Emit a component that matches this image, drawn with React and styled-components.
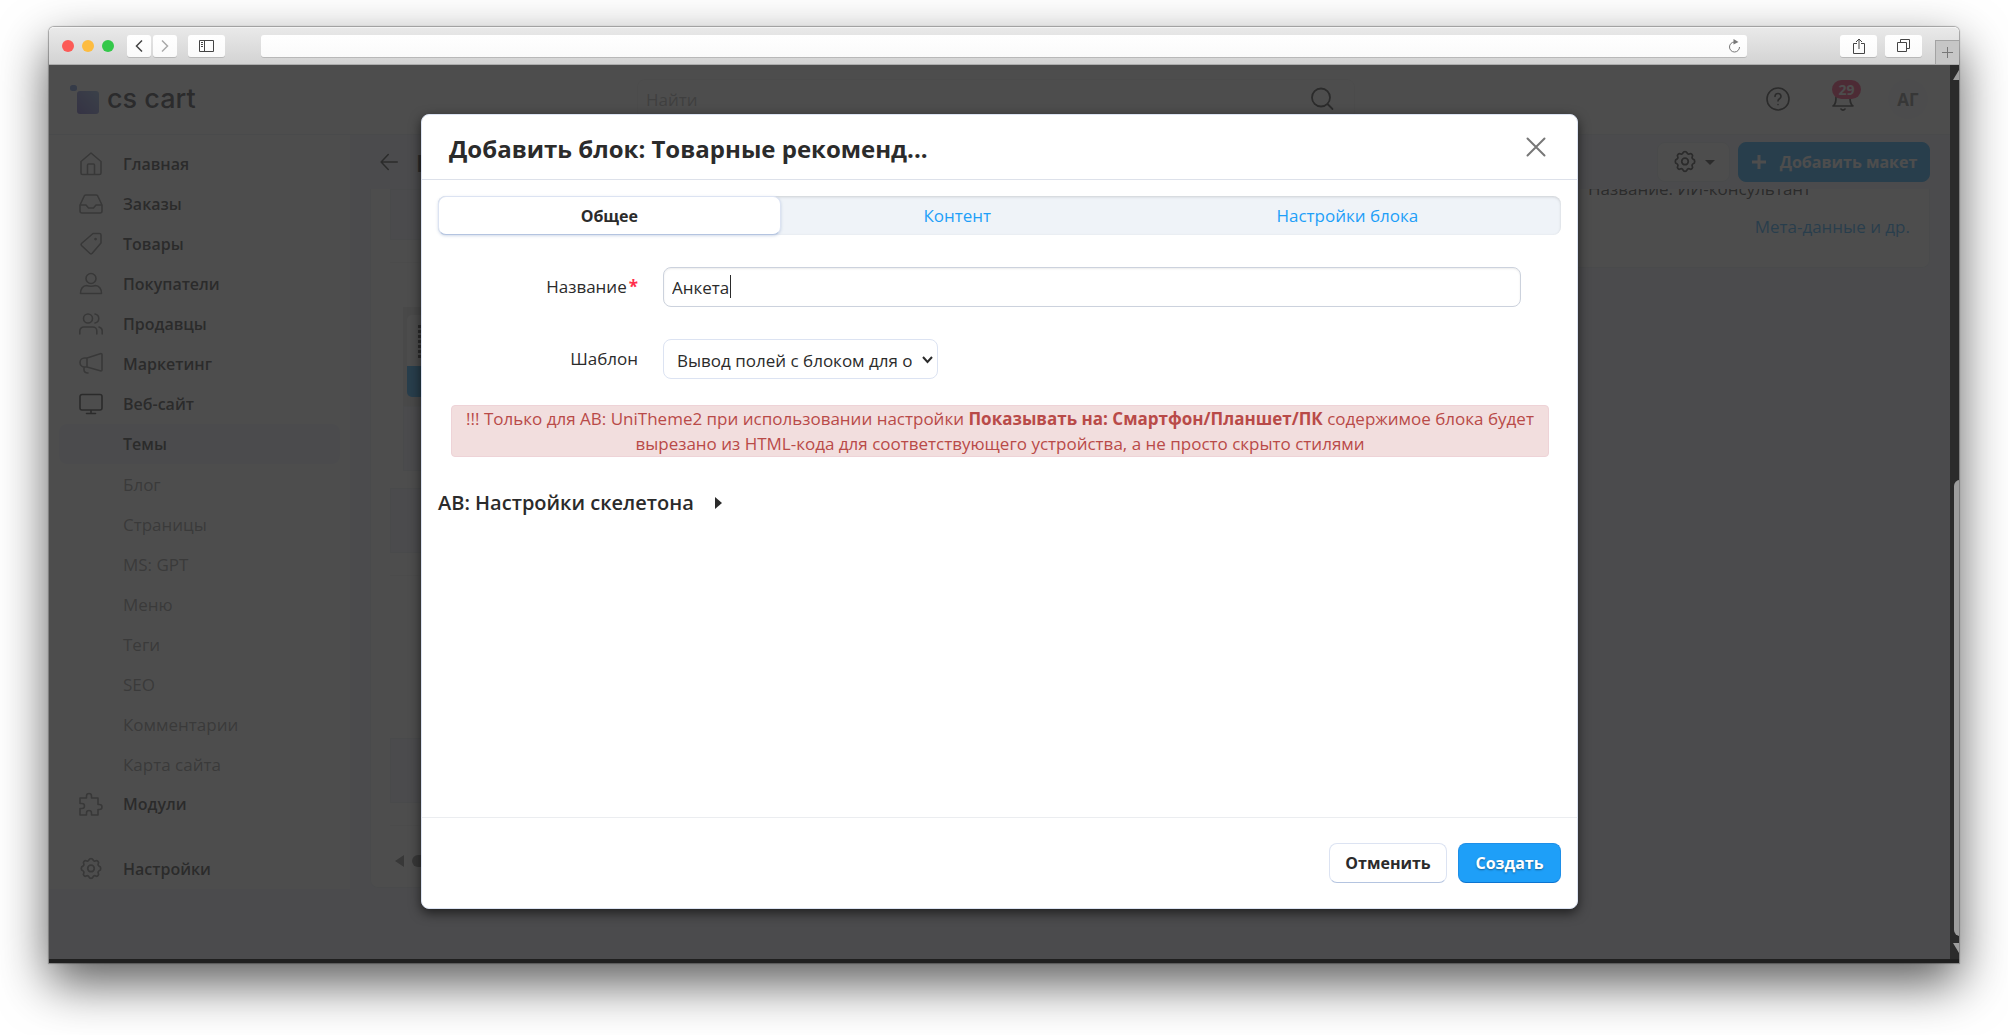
import React, { useState } from "react";
import styled, { createGlobalStyle } from "styled-components";

const GlobalStyle = createGlobalStyle`
  * {
    box-sizing: border-box;
  }

  html,
  body,
  #root {
    height: 100%;
  }

  body {
    margin: 0;
    background: #fff;
    color: #2b2b2b;
    font-family: "Open Sans", "Noto Sans", sans-serif;
    font-size: 17px;
  }

  button,
  input,
  select {
    font: inherit;
    color: inherit;
  }
`;

const Desktop = styled.div`
  height: 100%;
  padding: 27px 49px 72px;
  overflow: hidden;
`;

const Window = styled.div`
  height: 100%;
  display: flex;
  flex-direction: column;
  border-radius: 5px 5px 0 0;
  box-shadow: 0 0 1px 1px rgba(0, 0, 0, 0.3), 0 20px 50px rgba(0, 0, 0, 0.65);
`;

const Chrome = styled.div`
  height: 38px;
  flex: none;
  display: flex;
  align-items: center;
  padding: 0 0 1px 13px;
  border-top: 1px solid #f4f4f4;
  border-bottom: 1px solid #acacac;
  border-radius: 5px 5px 0 0;
  background: linear-gradient(#e9e9e9, #d3d3d3);
`;

const Lights = styled.div`
  display: flex;
  gap: 8px;
  margin-right: 13px;
`;

const Light = styled.span`
  width: 12px;
  height: 12px;
  border-radius: 50%;
  background: ${(props) => props.$color};
`;

const ChromeButton = styled.button`
  width: ${(props) => (props.$small ? "24px" : "37px")};
  height: 22px;
  display: flex;
  align-items: center;
  justify-content: center;
  padding: 0;
  border: 0;
  border-radius: 3px;
  background: linear-gradient(#fff, #fafafa);
  box-shadow: 0 1px 0 #b8b8b8;
`;

const ChromeGroup = styled.div`
  display: flex;
  gap: ${(props) => props.$gap || "0"};
  margin-left: ${(props) => props.$left || "0"};
`;

const Address = styled.div`
  flex: 1;
  height: 22px;
  margin: 0 93px 0 36px;
  display: flex;
  align-items: center;
  justify-content: flex-end;
  padding-right: 6px;
  border-radius: 3px;
  background: linear-gradient(#fff, #fafafa);
  box-shadow: 0 1px 0 #b8b8b8;
`;

const AddressInput = styled.input`
  flex: 1;
  border: 0;
  outline: 0;
  background: transparent;
  height: 20px;
`;

const NewTab = styled.button`
  width: 24px;
  height: 24px;
  align-self: flex-end;
  margin: 0 0 -1px 13px;
  padding: 0;
  display: flex;
  align-items: center;
  justify-content: center;
  border: 1px solid #a3a3a3;
  border-width: 1px 0 0 1px;
  background: #c6c6c6;
`;

const Viewport = styled.div`
  position: relative;
  flex: 1;
  min-height: 0;
  display: flex;
  border-bottom: 4px solid #1f1f1f;
`;

const Page = styled.div`
  position: relative;
  flex: 1;
  min-width: 0;
  display: flex;
  flex-direction: column;
  background: #f0f3fa;
`;

const Scrollbar = styled.div`
  width: 9px;
  flex: none;
  display: flex;
  flex-direction: column;
  background: #2b2b2b;
  overflow: hidden;

  svg {
    flex: none;
  }
`;

const ScrollThumb = styled.div`
  margin: auto 0 0 4px;
  height: 51%;
  width: 12px;
  border-radius: 6px;
  background: #9d9d9d;
`;

const Header = styled.header`
  height: 70px;
  flex: none;
  display: grid;
  grid-template-columns: 588px 718px 1fr;
  border-bottom: 1px solid #e6ecf3;
  background: #fff;
`;

const Logo = styled.a`
  display: flex;
  padding: 18px 0 0 20px;
  gap: 8px;
  color: #2b2b35;
  text-decoration: none;
  font: 500 27px/32px Inter, sans-serif;
`;

const Search = styled.div`
  height: 40px;
  margin-top: 14px;
  display: flex;
  align-items: center;
  padding: 0 20px 0 6px;
  border: 1px solid #f1f1f1;
  border-radius: 8px;
`;

const SearchInput = styled.input`
  flex: 1;
  border: 0;
  outline: 0;
  background: transparent;

  &::placeholder {
    color: #aaa;
  }
`;

const HeaderTools = styled.div`
  display: flex;
  justify-content: flex-end;
  align-items: flex-start;
  padding: 14px 22px 0 0;
  gap: 25px;
`;

const ToolButton = styled.button`
  position: relative;
  width: 40px;
  height: 40px;
  padding: 0;
  display: flex;
  align-items: center;
  justify-content: center;
  border: 0;
  border-radius: 50%;
  font-weight: 700;
  color: ${(props) => (props.$avatar ? "#777" : "#2b2b2b")};
  background: ${(props) => (props.$avatar ? "#f6f8fa" : "transparent")};
`;

const Badge = styled.span`
  position: absolute;
  top: 1px;
  left: 9px;
  width: 29px;
  line-height: 19px;
  border-radius: 10px;
  background: #ff2f6b;
  color: #fff;
  font-size: 14px;
  font-weight: 700;
`;

const Body = styled.div`
  flex: 1;
  display: flex;
  align-items: flex-start;
`;

const Sidebar = styled.nav`
  width: 301px;
  flex: none;
  padding: 9px 10px 0;
  background: #fff;
`;

const NavLink = styled.a`
  height: 40px;
  display: flex;
  align-items: center;
  gap: 20px;
  padding-left: 20px;
  margin-top: ${(props) => (props.$apart ? "25px" : "0")};
  border-radius: 8px;
  text-decoration: none;
  font-size: ${(props) => (props.$sub ? "17px" : "16px")};
  font-weight: ${(props) => (props.$sub ? 400 : 600)};
  color: ${(props) => (props.$sub ? "#8a8a8a" : "#2b2b2b")};
  background: ${(props) => (props.$active ? "#f0f3fa" : "transparent")};

  svg {
    width: 24px;
    height: 24px;
    color: ${(props) => (props.$open ? "#2b2b2b" : "#7c7c7c")};
  }
`;

const IconGap = styled.span`
  width: 24px;
`;

const Main = styled.main`
  flex: 1;
  min-width: 0;
  padding: 0 20px;
`;

const Actions = styled.div`
  height: 54px;
  display: flex;
  align-items: center;
  gap: 8px;
  padding-left: 10px;
`;

const PageTitle = styled.h1`
  flex: 1;
  margin: 0 0 0 10px;
  font-size: 24px;
`;

const BackLink = styled.a`
  display: flex;
  color: inherit;
`;

const ActionButton = styled.button`
  height: 40px;
  display: flex;
  align-items: center;
  justify-content: center;
  gap: ${(props) => (props.$primary ? "13px" : "8px")};
  min-width: ${(props) => (props.$primary ? "192px" : "73px")};
  padding: 0 8px;
  white-space: nowrap;
  border: 1px solid ${(props) => (props.$primary ? "#1e9ff8" : "#e4e9f0")};
  border-radius: 8px;
  font-size: 16px;
  font-weight: 700;
  color: ${(props) => (props.$primary ? "#fff" : "#2b2b2b")};
  background: ${(props) => (props.$primary ? "#1e9ff8" : "#fff")};
`;

const Columns = styled.div`
  display: grid;
  grid-template-columns: 1fr 360px;
  gap: 20px;
  align-items: start;
`;

const Card = styled.section`
  border: 1px solid #e6ecf3;
  border-top: 0;
  border-radius: 0 0 8px 8px;
  background: #fff;
`;

const LayoutCard = styled(Card)`
  height: 699px;
  padding: 0 19px;
  display: flex;
  flex-direction: column;
`;

const Strip = styled.div`
  height: ${(props) => props.$height || "65px"};
  flex: none;
  margin-top: ${(props) => props.$top || "0"};
  margin-left: ${(props) => props.$inset || "0"};
  border: 1px solid #e3eaf2;
  background: #f0f3fa;
`;

const Divider = styled.div`
  flex: none;
  margin-top: 22px;
  border-top: 1px solid #f2f2f2;
`;

const Tile = styled.div`
  height: 99px;
  flex: none;
  margin: 44px 0 0 13px;
  padding: 8px 4px 9px;
  background: #e2e2e2;
`;

const TileFace = styled.div`
  height: 82px;
  border-radius: 5px;
  padding: 10px 11px;
  background: linear-gradient(#fff 51px, #1e9ff8 51px);
`;

const TileDots = styled.div`
  width: 4px;
  height: 33px;
  background: repeating-linear-gradient(#2b2b2b 0 3px, transparent 3px 5px);
`;

const Pager = styled.div`
  display: flex;
  align-items: center;
  gap: 8px;
  margin: 29px 0 0 5px;
  color: #7c7c7c;
`;

const InfoCard = styled(Card)`
  height: 79px;
  overflow: hidden;
  padding: 0 19px 0 17px;
`;

const InfoName = styled.p`
  margin: -12px 0 0;
  line-height: 24px;
`;

const InfoLink = styled.a`
  display: block;
  margin-top: 14px;
  line-height: 24px;
  text-align: right;
  color: #1e9ff8;
  text-decoration: none;
`;

const Backdrop = styled.div`
  position: absolute;
  inset: 0 9px 0 0;
  background: rgba(43, 43, 43, 0.84);
  display: flex;
  justify-content: center;
  align-items: flex-start;
  padding: 49px 372px 50px;
`;

const Dialog = styled.div`
  width: 100%;
  height: 100%;
  display: flex;
  flex-direction: column;
  border: 1px solid #dce3f2;
  border-radius: 8px;
  background: #fff;
  box-shadow: 0 4px 12px rgba(0, 0, 0, 0.6);
`;

const DialogHeader = styled.div`
  height: 65px;
  flex: none;
  display: flex;
  align-items: center;
  justify-content: space-between;
  padding: 0 29px 0 27px;
  border-bottom: 1px solid #dde1ea;
`;

const DialogTitle = styled.h2`
  margin: 0;
  padding-top: 4px;
  font-size: 24px;
  line-height: 32px;
  font-weight: 700;
`;

const CloseButton = styled.button`
  display: flex;
  padding: 0;
  border: 0;
  background: transparent;
  color: #777;
`;

const DialogBody = styled.div`
  flex: 1;
  padding: 16px 16px 0;
`;

const Tabs = styled.div`
  height: 39px;
  display: flex;
  border-radius: 8px;
  background: #eff3f8;
  box-shadow: inset 0 1px 3px rgba(0, 0, 0, 0.15);
`;

const Tab = styled.button`
  flex: 1 1 auto;
  padding: 0;
  border: 1px solid ${(props) => (props.$active ? "#dce3f2" : "transparent")};
  border-bottom-color: ${(props) => (props.$active ? "#b4c4e0" : "transparent")};
  border-radius: 8px;
  font-size: ${(props) => (props.$active ? "16px" : "17px")};
  font-weight: ${(props) => (props.$active ? 700 : 400)};
  color: ${(props) => (props.$active ? "#2b2b2b" : "#1e9ff8")};
  background: ${(props) => (props.$active ? "#fff" : "transparent")};
  box-shadow: ${(props) => (props.$active ? "0 1px 3px rgba(100, 130, 180, 0.3)" : "none")};
`;

const Field = styled.div`
  height: 40px;
  display: grid;
  grid-template-columns: 200px 1fr;
  column-gap: 25px;
  align-items: center;
  margin: 32px 40px 0 0;
`;

const Label = styled.label`
  padding-bottom: 2px;
  text-align: right;
`;

const Required = styled.span`
  margin-left: 2px;
  font-weight: 700;
  color: #ff2f4b;
`;

const Control = styled.div`
  position: relative;
  width: ${(props) => props.$width || "100%"};
`;

const TextInput = styled.input`
  display: block;
  width: 100%;
  height: 40px;
  padding: 0 8px;
  border: 1px solid #ccd2dd;
  border-radius: 8px;
  outline: 0;
  caret-color: transparent;
  box-shadow: inset 0 1px 2px rgba(0, 0, 0, 0.08);
`;

const Caret = styled.span`
  position: absolute;
  top: 8px;
  left: 67px;
  width: 1px;
  height: 23px;
  background: #2b2b2b;
`;

const SelectInput = styled.select`
  display: block;
  width: 100%;
  height: 40px;
  padding: 2px 25px 0 13px;
  appearance: none;
  border: 1px solid #dce3f2;
  border-radius: 8px;
  background: #fff;
`;

const SelectArrow = styled.svg`
  position: absolute;
  top: 17px;
  right: 5px;
  pointer-events: none;
`;

const Alert = styled.div`
  margin: 26px 12px 0 13px;
  padding: 0 8px;
  border: 1px solid #eed3d7;
  border-radius: 4px;
  line-height: 25px;
  text-align: center;
  color: #b94a48;
  background: #f2dede;
`;

const Disclosure = styled.button`
  margin-top: 31px;
  padding: 0;
  display: flex;
  align-items: center;
  gap: 21px;
  border: 0;
  background: transparent;
  font-size: 20px;
  line-height: 30px;
  font-weight: 600;
`;

const DialogFooter = styled.div`
  height: 91px;
  flex: none;
  display: flex;
  justify-content: flex-end;
  gap: 11px;
  padding: 25px 16px 0;
  border-top: 1px solid #ebedf0;
`;

const Button = styled.button`
  height: 40px;
  min-width: ${(props) => (props.$primary ? "103px" : "118px")};
  padding: 0;
  border: 1px solid ${(props) => (props.$primary ? "#1e8fe8" : "#dce3f2")};
  border-bottom-color: ${(props) => (props.$primary ? "#0c74d0" : "#b4c4e0")};
  border-radius: 8px;
  font-size: 16px;
  font-weight: 700;
  color: ${(props) => (props.$primary ? "#fff" : "#2b2b2b")};
  background: ${(props) => (props.$primary ? "#1e9ff8" : "#fff")};
  text-shadow: ${(props) => (props.$primary ? "0 1px 2px rgba(0, 0, 0, 0.4)" : "none")};
`;

const gearPath =
  "M10.3 3.4c.4-1.3 3-1.3 3.4 0 .4 1.3 1.6 1.8 2.8 1.1 1.2-.7 3 1.1 2.3 2.300-.7 1.200-.2 2.500 1.100 2.800 1.300.4 1.300 3.400 0 3.800-1.300.4-1.800 1.600-1.100 2.800.7 1.200-1.100 3-2.300 2.300-1.200-.7-2.400-.2-2.800 1.100-.4 1.300-3 1.300-3.400 0-.4-1.300-1.600-1.800-2.800-1.100-1.200.7-3-1.100-2.300-2.300.7-1.200.2-2.400-1.100-2.800-1.300-.4-1.300-3.400 0-3.800 1.300-.4 1.800-1.600 1.100-2.800-.7-1.200 1.100-3 2.300-2.300 1.200.7 2.400.2 2.800-1.100z";

const icons = {
  home: "M2 9.5 12 1l10 8.5V21a1.5 1.5 0 0 1-1.5 1.5h-17A1.5 1.5 0 0 1 2 21zM8.5 22V13a1 1 0 0 1 1-1h5a1 1 0 0 1 1 1v9",
  orders: "M1 13 5 4.5A2 2 0 0 1 6.8 3h10.4A2 2 0 0 1 19 4.5L23 13v6a2 2 0 0 1-2 2H3a2 2 0 0 1-2-2zM1 13h6l2.5 3h5l2.5-3h6",
  tag: "M14 1.500h6.500A1.500 1.500 0 0 1 22 3v8L13 21.500a1.500 1.500 0 0 1-2 0L2.500 13.500a1.500 1.500 0 0 1 0-2zM16.500 6.500a.6.6 0 1 0 .1 0z",
  user: "M12 1.5a5 5 0 1 1 0 10 5 5 0 0 1 0-10zM1.5 21.5c0-4.5 2.5-8 6-8 2 1 7 1 9 0 3.5 0 6 3.5 6 8z",
  users: "M9 2a4.500 4.500 0 1 1 0 9 4.500 4.500 0 0 1 0-9zM0.800 22v-3a4 4 0 0 1 4-4h9a4 4 0 0 1 4 4v3M16 2c5 1 5 8 0 9M20 15c2 .6 3.200 2 3.200 4v3",
  horn: "M8 6l14-4.500c.6 0 1 .4 1 1V18c0 .6-.5 1-1 1L8 15H5.500a4.500 4.500 0 0 1 0-9zM8 6v9M5 15v2.500c0 2.500 2 3.500 4 3.500",
  monitor: "M3 2.500h18a2 2 0 0 1 2 2V16a2 2 0 0 1-2 2H3a2 2 0 0 1-2-2V4.500a2 2 0 0 1 2-2zM12 18v3.500M7.500 21.500h9",
  puzzle: "M1 6h6.500V4a2.500 2.500 0 0 1 5 0v2H19v6.500h1.500a2.500 2.500 0 0 1 0 5H19V23h-6.500v-2a2.500 2.500 0 0 0-5 0v2H1v-6.500h2a2.500 2.500 0 0 0 0-5H1z",
  gear: gearPath + "M12 8.500a3 3 0 1 1 0 6 3 3 0 0 1 0-6z",
};

const Icon = ({ d, size = 24, width = 1.6, box = "0 0 24 24" }) => (
  <svg
    width={size}
    height={size}
    viewBox={box}
    fill="none"
    stroke="currentColor"
    strokeWidth={width}
    strokeLinecap="round"
    strokeLinejoin="round"
    aria-hidden="true"
  >
    <path d={d} />
  </svg>
);

const menu = [
  { name: "Главная", icon: "home" },
  { name: "Заказы", icon: "orders" },
  { name: "Товары", icon: "tag" },
  { name: "Покупатели", icon: "user" },
  { name: "Продавцы", icon: "users" },
  { name: "Маркетинг", icon: "horn" },
  { name: "Веб-сайт", icon: "monitor", open: true },
  { name: "Темы", active: true },
  { name: "Блог", sub: true },
  { name: "Страницы", sub: true },
  { name: "MS: GPT", sub: true },
  { name: "Меню", sub: true },
  { name: "Теги", sub: true },
  { name: "SEO", sub: true },
  { name: "Комментарии", sub: true },
  { name: "Карта сайта", sub: true },
  { name: "Модули", icon: "puzzle" },
  { name: "Настройки", icon: "gear", apart: true },
];

const tabs = ["Общее", "Контент", "Настройки блока"];

const BrowserBar = () => (
  <Chrome>
    <Lights>
      <Light $color="#fc5b57" />
      <Light $color="#fdbc40" />
      <Light $color="#34c84a" />
    </Lights>
    <ChromeGroup $gap="2px">
      <ChromeButton $small aria-label="Назад">
        <svg width="8" height="12" fill="none" stroke="#444" strokeWidth="1.5">
          <path d="M7 .5 1.5 6 7 11.5" />
        </svg>
      </ChromeButton>
      <ChromeButton $small aria-label="Вперёд">
        <svg width="8" height="12" fill="none" stroke="#aaa" strokeWidth="1.5">
          <path d="M1 .5 6.5 6 1 11.5" />
        </svg>
      </ChromeButton>
    </ChromeGroup>
    <ChromeGroup $left="11px">
      <ChromeButton aria-label="Боковая панель">
        <svg width="15" height="12" fill="none" stroke="#444">
          <path d="M.5.5h14v11H.5zM5.5.5v11M2 2.5h2M2 4.5h2M2 6.5h2" />
        </svg>
      </ChromeButton>
    </ChromeGroup>
    <Address>
      <AddressInput aria-label="Адрес" />
      <svg width="13" height="14" fill="none" stroke="#777">
        <path d="M6.5 3a5 5 0 1 0 5 5" />
        <path d="M5.5 0v5.5L10.5 3z" fill="#777" stroke="none" />
      </svg>
    </Address>
    <ChromeGroup $gap="8px">
      <ChromeButton aria-label="Поделиться">
        <svg width="12" height="16" fill="none" stroke="#444">
          <path d="M4 5.5H.5v10h11v-10H8M6 11V1M3 4l3-3 3 3" />
        </svg>
      </ChromeButton>
      <ChromeButton aria-label="Вкладки">
        <svg width="13" height="13" fill="none" stroke="#444">
          <path d="M.5 3.5h9v9h-9zM3.5 3V.5h9v9H10" />
        </svg>
      </ChromeButton>
    </ChromeGroup>
    <NewTab aria-label="Новая вкладка">
      <svg width="11" height="11" stroke="#777">
        <path d="M5.5 0v11M0 5.5h11" />
      </svg>
    </NewTab>
  </Chrome>
);

const BlockDialog = () => {
  const [tab, setTab] = useState(0);
  const [name, setName] = useState("Анкета");

  return (
    <Backdrop>
      <Dialog role="dialog" aria-labelledby="dialog-title">
        <DialogHeader>
          <DialogTitle id="dialog-title">Добавить блок: Товарные рекоменд...</DialogTitle>
          <CloseButton aria-label="Закрыть">
            <Icon d="M3.5 3.5l17 17M20.5 3.5l-17 17" width={2} />
          </CloseButton>
        </DialogHeader>
        <DialogBody>
          <Tabs role="tablist">
            {tabs.map((text, i) => (
              <Tab key={text} role="tab" $active={tab === i} onClick={() => setTab(i)}>
                {text}
              </Tab>
            ))}
          </Tabs>
          <Field>
            <Label htmlFor="block-name">
              Название<Required>*</Required>
            </Label>
            <Control>
              <TextInput
                id="block-name"
                value={name}
                onChange={(e) => setName(e.target.value)}
              />
              {name === "Анкета" && <Caret />}
            </Control>
          </Field>
          <Field>
            <Label htmlFor="block-template">Шаблон</Label>
            <Control $width="275px">
              <SelectInput id="block-template">
                <option>Вывод полей с блоком для от</option>
              </SelectInput>
              <SelectArrow width="11" height="8" fill="none" stroke="#2b2b2b" strokeWidth="2">
                <path d="M1 1l4.500 5L10 1" />
              </SelectArrow>
            </Control>
          </Field>
          <Alert>
            !!! Только для AB: UniTheme2 при использовании настройки{" "}
            <b>Показывать на: Смартфон/Планшет/ПК</b> содержимое блока будет вырезано из
            HTML-кода для соответствующего устройства, а не просто скрыто стилями
          </Alert>
          <Disclosure>
            АВ: Настройки скелетона
            <svg width="7" height="12" fill="#2b2b2b">
              <path d="M0 0l7 6-7 6z" />
            </svg>
          </Disclosure>
        </DialogBody>
        <DialogFooter>
          <Button>Отменить</Button>
          <Button $primary>Создать</Button>
        </DialogFooter>
      </Dialog>
    </Backdrop>
  );
};

const App = () => {
  return (
    <Desktop>
      <GlobalStyle />
      <Window>
        <BrowserBar />
        <Viewport>
          <Page>
            <Header>
              <Logo href="#">
                <svg width="30" height="32">
                  <defs>
                    <linearGradient id="logo" x1="0" y1="1" x2="1" y2="0">
                      <stop offset="0" stopColor="#6a5cc5" />
                      <stop offset="1" stopColor="#8fb2e5" />
                    </linearGradient>
                  </defs>
                  <rect x="1" y="2" width="7" height="6" rx="2.5" fill="#6a90e0" />
                  <rect x="8" y="8" width="22" height="23" rx="3" fill="url(#logo)" />
                </svg>
                cs cart
              </Logo>
              <Search>
                <SearchInput placeholder="Найти" aria-label="Найти" />
                <Icon d="M11 1.5a9 9 0 1 1 0 18 9 9 0 0 1 0-18zM18 17.500l4.500 4.500" width={1.8} />
              </Search>
              <HeaderTools>
                <ToolButton aria-label="Помощь">
                  <Icon d="M12 1a11 11 0 1 1 0 22 11 11 0 0 1 0-22zM9 9.500c0-4 6-4 6 0 0 2.500-3 2-3 4.500M12 17.500v.1" />
                </ToolButton>
                <ToolButton aria-label="Уведомления">
                  <Icon d="M2 19h20c-3-2-3-5-3-9a7 7 0 0 0-14 0c0 4 0 7-3 9zM10 22c1 1.500 3 1.500 4 0" />
                  <Badge>29</Badge>
                </ToolButton>
                <ToolButton $avatar>АГ</ToolButton>
              </HeaderTools>
            </Header>
            <Body>
              <Sidebar>
                {menu.map((item) => (
                  <NavLink
                    key={item.name}
                    href="#"
                    $sub={item.sub}
                    $active={item.active}
                    $open={item.open}
                    $apart={item.apart}
                  >
                    {item.icon ? (
                      <Icon
                        d={icons[item.icon]}
                        box={item.icon === "gear" ? "1 1 22 22" : undefined}
                      />
                    ) : (
                      <IconGap />
                    )}
                    {item.name}
                  </NavLink>
                ))}
              </Sidebar>
              <Main>
                <Actions>
                  <BackLink href="#" aria-label="Назад">
                    <Icon d="M23 12H2M11 2 1.5 12 11 22" size={18} width={2} />
                  </BackLink>
                  <PageTitle>Р</PageTitle>
                  <ActionButton aria-label="Настройки">
                    <Icon d={icons.gear} box="1 1 22 22" />
                    <svg width="10" height="5" fill="currentColor">
                      <path d="M0 0h10L5 5z" />
                    </svg>
                  </ActionButton>
                  <ActionButton $primary>
                    <svg width="16" height="16" stroke="currentColor" strokeWidth="3">
                      <path d="M8 1v14M1 8h14" />
                    </svg>
                    Добавить макет
                  </ActionButton>
                </Actions>
                <Columns>
                  <LayoutCard>
                    <Strip $height="51px" />
                    <Divider />
                    <Tile>
                      <TileFace>
                        <TileDots />
                      </TileFace>
                    </Tile>
                    <Strip $inset="13px" />
                    <Strip $top="17px" />
                    <Divider />
                    <Strip $top="162px" />
                    <Divider />
                    <Pager>
                      <svg width="9" height="12" fill="currentColor">
                        <path d="M9 0v12L0 6z" />
                      </svg>
                      <svg width="80" height="12" fill="currentColor">
                        <rect width="80" height="12" rx="6" />
                      </svg>
                    </Pager>
                  </LayoutCard>
                  <InfoCard>
                    <InfoName>Название: ИИ-консультант</InfoName>
                    <InfoLink href="#">Мета-данные и др.</InfoLink>
                  </InfoCard>
                </Columns>
              </Main>
            </Body>
          </Page>
          <Scrollbar>
            <svg width="18" height="16" fill="#9d9d9d">
              <path d="M3 15L9 5h2l6 10z" />
            </svg>
            <ScrollThumb />
            <svg width="18" height="23" fill="#9d9d9d">
              <path d="M3 7L9 17h2l6-10z" />
            </svg>
          </Scrollbar>
          <BlockDialog />
        </Viewport>
      </Window>
    </Desktop>
  );
};

export default App;
